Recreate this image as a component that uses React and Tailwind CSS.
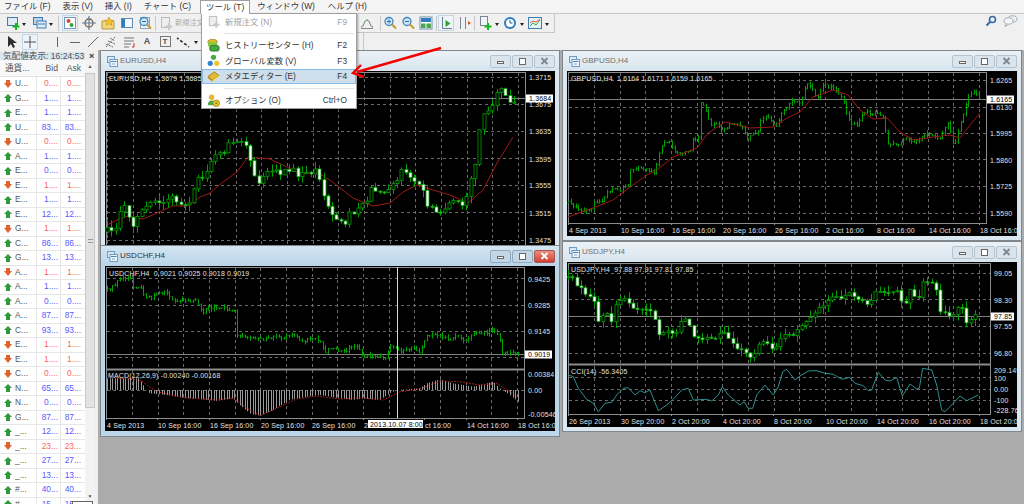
import React from "react";

const range = (start, n, step = 25.66) => Array.from({ length: n }, (_, i) => Math.round(start + i * step));
const z = (ox, oy, pts) => pts.map(([a, b]) => [ox + a / 3, oy + b / 3]);

function lerp(pts, x) {
  if (x <= pts[0][0]) return pts[0][1];
  for (let i = 1; i < pts.length; i++) {
    if (x <= pts[i][0]) {
      const [x0, y0] = pts[i - 1];
      const [x1, y1] = pts[i];
      return y0 + ((y1 - y0) * (x - x0)) / (x1 - x0);
    }
  }
  return pts[pts.length - 1][1];
}

function rng(seed) {
  let s = seed;
  return () => {
    s = (s * 16807) % 2147483647;
    return s / 2147483647;
  };
}

const line = (pts) => pts.map(([a, b]) => `${a.toFixed(1)},${b.toFixed(1)}`).join(" ");

function Candles({ pts, from, to, seed, noise = 2 }) {
  const r = rng(seed);
  const out = [];
  let o = lerp(pts, from);
  for (let x = from, i = 0; x <= to; x += 4.33, i++) {
    const c = lerp(pts, x) + (r() - 0.5) * noise;
    const top = Math.min(o, c);
    const bot = Math.max(o, c);
    const px = Math.round(x) + 0.5;
    const hi = top - r() * 7;
    const lo = bot + r() * 7;
    out.push(
      <g key={i}>
        <path d={`M${px} ${hi}V${lo}`} className="stroke-[#00a000]" />
        <rect
          x={px - 1.5}
          y={top}
          width={3}
          height={Math.max(bot - top, 1)}
          className={c > o ? "fill-white stroke-[#00a000]" : "fill-black stroke-[#00a000]"}
          strokeWidth={0.8}
        />
      </g>
    );
    o = c;
  }
  return <g>{out}</g>;
}

function Bars({ pts, from, to, seed }) {
  const r = rng(seed);
  let d = "";
  let o = lerp(pts, from);
  for (let x = from; x <= to; x += 2.6) {
    const c = lerp(pts, x) + (r() - 0.5) * 3;
    const px = Math.round(x) + 0.5;
    const hi = Math.min(o, c) - r() * 3;
    const lo = Math.max(o, c) + r() * 3;
    d += `M${px} ${hi.toFixed(1)}V${lo.toFixed(1)}M${px - 1} ${o.toFixed(1)}H${px}M${px} ${c.toFixed(1)}H${px + 1}`;
    o = c;
  }
  return <path d={d} fill="none" className="stroke-[#00a000]" strokeWidth={1} />;
}

function Label({ x, y, children, dark }) {
  return (
    <text x={x} y={y} dominantBaseline="central" className={dark ? "fill-black" : "fill-[#e0e0e0]"}>
      {children}
    </text>
  );
}

function Chart({ box, right, bottom, hGrid, vGrid, current, head, prices, box2, times, children }) {
  return (
    <svg viewBox={`${box[0]} ${box[1]} ${box[2]} ${box[3]}`} className="block h-full w-full text-[7px] tracking-[0.15px]">
      <rect x={box[0] + 1.5} y={box[1] + 1.5} width={right - box[0] - 1} height={bottom - box[1] - 1} fill="none" className="stroke-[#8c8c8c]" />
      {hGrid.map((y) => (
        <path key={y} d={`M${box[0] + 2} ${y + 0.5}H${right}`} className="stroke-[#6a6a6a]" strokeDasharray="3 3" />
      ))}
      {vGrid.map((x) => (
        <path key={x} d={`M${x + 0.5} ${box[1] + 2}V${bottom}`} className="stroke-[#6a6a6a]" strokeDasharray="3 3" />
      ))}
      <path d={`M${box[0] + 2} ${current + 0.5}H${right}`} className="stroke-[#808080]" />
      {children}
      <Label x={box[0] + 4} y={box[1] + 7}>{head}</Label>
      {prices.map(([t, y]) => (
        <Label key={t} x={right + 4} y={y}>{t}</Label>
      ))}
      <rect x={right + 1} y={current - 3.5} width={box2} height={8} className="fill-white" />
      <Label x={right + 4} y={current + 0.5} dark>{prices.current}</Label>
      {times.map(([t, x]) => (
        <g key={t}>
          <path d={`M${x + 0.5} ${bottom}v2`} className="stroke-[#8c8c8c]" />
          <Label x={x + 1} y={bottom + 7}>{t}</Label>
        </g>
      ))}
    </svg>
  );
}

const eurPrice = [[107,232],[117,227],[120,207],[125,200],[133,227],[147,200],[153,203],[163,200],[175,197],[185,210],[197,180],[213,160],[227,147],[243,143],[248,157],[253,177],[263,180],[270,170],[287,170],[297,175],[304,168],[317,173],[322,193],[330,213],[343,223],[353,210],[363,207],[373,187],[382,190],[390,185],[402,173],[410,178],[423,185],[428,210],[440,213],[450,207],[457,197],[463,210],[475,160],[480,123],[487,108],[500,93],[513,100]];
const eurMa = [[107,225],[117,220],[128,216],[143,219],[157,213],[172,206],[187,206],[200,197],[210,193],[223,182],[237,172],[248,157],[270,159],[287,167],[300,174],[317,172],[330,180],[340,188],[353,198],[373,206],[390,203],[403,192],[417,185],[433,190],[450,195],[468,203],[483,190],[497,163],[513,137]];
const gbpPrice = [[568,203],[580,210],[592,210],[593,203],[603,200],[608,190],[620,190],[623,185],[628,185],[630,170],[638,167],[647,170],[655,173],[658,157],[663,143],[670,142],[673,150],[680,153],[690,152],[693,140],[698,137],[699,102],[705,107],[710,125],[717,125],[722,130],[732,123],[742,127],[747,138],[757,133],[762,117],[770,118],[775,127],[783,110],[792,100],[800,102],[807,83],[817,97],[823,85],[833,88],[843,100],[848,120],[857,127],[863,113],[875,113],[883,118],[887,143],[900,145],[907,137],[915,143],[927,133],[938,140],[948,123],[954,148],[962,117],[967,100],[975,90],[980,100]];
const gbpMa = [[568,217],[593,208],[613,200],[630,187],[647,175],[657,170],[673,157],[697,148],[708,133],[725,122],[750,128],[773,127],[787,118],[800,112],[813,97],[833,90],[848,95],[860,110],[873,119],[887,118],[900,132],[913,140],[933,137],[950,135],[960,138],[970,125],[980,113]];
const chfPrice = [[107,290],[115,285],[120,278],[130,277],[133,287],[140,287],[145,298],[153,297],[158,293],[168,293],[173,302],[182,300],[185,302],[195,300],[198,304],[202,313],[208,308],[217,307],[233,310],[236,312],[237,335],[247,338],[263,340],[270,337],[282,338],[293,333],[300,342],[313,338],[320,342],[324,352],[333,348],[343,352],[355,345],[363,355],[373,355],[385,360],[390,345],[400,352],[410,348],[420,353],[425,337],[437,335],[450,340],[457,335],[465,342],[475,332],[487,333],[492,330],[498,335],[502,353],[518,354]];
const macdHist = [
  ...z(100, 245, [[20,400],[120,400],[135,430],[150,445],[200,450],[250,458],[300,462],[350,468],[400,460],[420,480],[450,505],[480,512],[520,495],[570,465],[620,455],[660,450],[720,460]]),
  ...z(340, 245, [[40,465],[70,460],[120,465],[150,445],[170,435],[240,430],[260,415],[300,403],[340,415],[400,425],[460,410],[480,430],[510,450],[535,470]]),
];
const macdSignal = [
  ...z(100, 245, [[20,392],[60,400],[120,405],[170,440],[250,458],[350,465],[400,458],[440,490],[480,512],[530,490],[590,462],[650,453],[720,462]]),
  ...z(340, 245, [[60,458],[130,465],[180,440],[240,432],[300,408],[360,410],[420,420],[470,415],[530,455]]),
];
const jpyPrice = [[568,277],[573,277],[577,287],[582,288],[586,295],[590,297],[594,302],[598,322],[603,315],[607,313],[612,323],[616,303],[620,300],[624,298],[628,303],[633,308],[637,309],[642,309],[650,310],[654,318],[659,335],[663,333],[667,331],[672,333],[676,333],[680,322],[684,318],[688,322],[693,337],[697,337],[701,341],[705,337],[710,338],[714,340],[718,335],[722,330],[727,338],[731,340],[735,348],[740,349],[744,350],[748,357],[753,357],[757,345],[761,344],[765,340],[770,348],[774,350],[778,342],[783,335],[787,334],[791,334],[795,336],[799,325],[804,325],[808,318],[813,317],[817,308],[821,306],[825,305],[829,299],[833,296],[838,297],[842,299],[847,293],[851,292],[855,299],[859,300],[863,301],[868,305],[872,299],[876,291],[881,292],[885,293],[889,293],[894,292],[898,290],[902,303],[906,303],[910,290],[915,297],[919,297],[923,282],[928,282],[932,283],[936,290],[940,312],[944,312],[949,316],[953,315],[957,307],[962,308],[966,323],[970,320],[974,315],[978,315]];
const cci = [
  ...z(560, 240, [[25,405],[40,410],[55,445],[80,478],[100,490],[115,515],[135,490],[155,487],[170,465],[190,445],[205,443],[225,465],[240,452],[255,458],[270,450],[295,512],[320,495],[340,478],[365,450],[385,445],[400,480],[440,478],[455,483],[475,465],[487,440],[505,465],[540,495],[552,485],[565,505],[578,505],[590,465],[615,435],[640,465],[655,440],[668,395],[680,388],[705,420],[720,408]]),
  ...z(800, 240, [[25,393],[50,392],[75,400],[100,403],[125,418],[150,412],[165,430],[190,437],[205,452],[215,450],[235,397],[255,420],[270,423],[290,412],[307,468],[330,432],[350,447],[358,445],[368,385],[395,390],[410,435],[425,510],[435,515],[460,490],[480,468],[500,482],[535,465]]),
];

function withCurrent(list, current) {
  const copy = [...list];
  copy.current = current;
  return copy;
}

function WinIcon() {
  return (
    <svg width="11" height="11" viewBox="0 0 11 11" className="shrink-0">
      <rect x="0.5" y="0.5" width="7" height="6" fill="#dbe8f4" stroke="#6f9cc4" />
      <rect x="3" y="3.5" width="7.5" height="7" fill="#eef4fa" stroke="#6f9cc4" />
      <path d="M4 5.5h5.5" stroke="#4c86b8" />
      <path d="M5 8h3" stroke="#8aa9c6" />
    </svg>
  );
}

function Window({ className, title, active, children }) {
  const btn = active ? "border-[#8fa9bf] bg-[#c3d6e6]" : "border-[#b5c3cf] bg-[#d9e4ed]";
  return (
    <div
      className={`absolute flex w-[460px] flex-col border border-[#7f868c] ${
        active ? "bg-[#bdd7ea]" : "bg-[#dbe7f0]"
      } ${className}`}
    >
      <div
        className={`flex h-[20px] shrink-0 items-center pl-[6px] pr-[4px] ${
          active ? "bg-gradient-to-b from-[#d3e5f2] to-[#b9d4e8]" : "bg-gradient-to-b from-[#ebf1f6] to-[#d8e5ee]"
        }`}
      >
        <WinIcon />
        <span className={`ml-[2px] text-[8px] ${active ? "text-[#333]" : "text-[#707070]"}`}>{title}</span>
        <div className="ml-auto flex gap-[1px]">
          <div className={`flex h-[13px] w-[21px] items-center justify-center rounded-[2px] border ${btn}`}>
            <div className="mt-[3px] h-[3px] w-[7px] border border-[#666] bg-white" />
          </div>
          <div className={`flex h-[13px] w-[21px] items-center justify-center rounded-[2px] border ${btn}`}>
            <div className="h-[7px] w-[7px] border border-[#666] bg-white" />
          </div>
          <div
            className={`flex h-[13px] w-[21px] items-center justify-center rounded-[2px] border ${
              active ? "border-[#a8564e] bg-gradient-to-b from-[#e88d80] to-[#cf3f30]" : btn
            }`}
          >
            <svg width="9" height="8" viewBox="0 0 9 8">
              <path d="M1.5 1l6 6M7.5 1l-6 6" stroke={active ? "#fff" : "#7b8791"} strokeWidth="1.8" />
            </svg>
          </div>
        </div>
      </div>
      <div className="mx-[4px] bg-black">{children}</div>
    </div>
  );
}

const symbols = [
  ["U", 0, "0....", "0...."], ["G", 1, "1....", "1...."], ["E", 1, "1....", "1...."], ["U", 1, "83...", "83..."],
  ["U", 0, "0....", "0...."], ["A", 1, "1....", "1...."], ["E", 1, "0....", "0...."], ["E", 0, "1....", "1...."],
  ["E", 1, "1....", "1...."], ["E", 1, "12...", "12..."], ["G", 0, "1....", "1...."], ["C", 1, "86...", "86..."],
  ["G", 1, "13...", "13..."], ["A", 0, "1....", "1...."], ["A", 1, "1....", "1...."], ["A", 1, "0....", "0...."],
  ["A", 1, "87...", "87..."], ["C", 1, "93...", "93..."], ["E", 0, "1....", "1...."], ["E", 0, "1....", "1...."],
  ["C", 0, "0....", "0...."], ["N", 1, "65...", "65..."], ["N", 1, "0....", "0...."], ["G", 1, "87...", "87..."],
  ["_", 1, "12...", "12..."], ["_", 0, "23...", "23..."], ["_", 1, "27...", "27..."], ["_", 1, "13...", "13..."],
  ["#", 1, "40...", "40..."], ["#", 1, "15...", "15..."],
];

function Tick({ up }) {
  return up ? (
    <svg width="8" height="8" viewBox="0 0 8 8">
      <path d="M4 0l4 4H6v4H2V4H0z" fill="#2f9a3c" />
    </svg>
  ) : (
    <svg width="8" height="8" viewBox="0 0 8 8">
      <path d="M2 0h4v3h2L4 8 0 3h2z" fill="#e0622c" />
    </svg>
  );
}

function MarketWatch() {
  return (
    <div className="flex h-full w-[98px] shrink-0 flex-col bg-[#f0f0f0] pt-[2px]">
      <div className="flex h-[8px] w-[85px] shrink-0 items-center bg-[#d9e6f1] pl-[3px] text-[8.6px] text-[#555]">
        <span className="whitespace-nowrap">気配値表示: 16:24:53</span>
      </div>
      <div className="absolute left-[89px] top-[51px] z-10 text-[9px] font-bold leading-[10px] text-[#333]">×</div>
      <div className="flex min-h-0 flex-1">
        <div className="w-[85px] shrink-0 overflow-hidden bg-white">
          <div className="flex h-[17px] items-center border-b border-[#e2e2e2] bg-[#f8f8f8] text-[8.6px] text-[#555]">
            <span className="w-[36px] pl-[5px]">通貨...</span>
            <span className="w-[24px] pr-[2px] text-right">Bid</span>
            <span className="w-[24px] pr-[3px] text-right">Ask</span>
          </div>
          {symbols.map(([s, up, bid, ask], i) => (
            <div key={i} className="flex h-[14.5px] items-center border-b border-[#e6e6e6] text-[8.4px]">
              <span className="flex w-[36px] items-center gap-[3px] pl-[4px] text-[#555]">
                <Tick up={up} />
                {s}...
              </span>
              <span className={`flex h-full w-[24px] items-center justify-end border-l border-[#e6e6e6] pr-[2px] ${up ? "text-[#5a5aff]" : "text-[#ff5f5f]"}`}>
                {bid}
              </span>
              <span className={`flex h-full w-[24px] items-center justify-end border-l border-[#e6e6e6] pr-[3px] ${up ? "text-[#5a5aff]" : "text-[#ff5f5f]"}`}>
                {ask}
              </span>
            </div>
          ))}
        </div>
        <div className="flex h-full w-[10px] shrink-0 flex-col bg-[#f3f3f3]">
          <div className="flex h-[13px] items-center justify-center text-[5px] text-[#555]">▲</div>
          <div className="flex h-[335px] items-center justify-center border border-[#c8c8c8] bg-[#e2e2e2]">
            <div className="h-[4px] w-[5px] border-y border-[#999]" />
          </div>
          <div className="mt-auto flex h-[14px] items-center justify-center text-[5px] text-[#555]">▼</div>
        </div>
      </div>
      <div className="absolute bottom-0 left-[72px] h-[3px] w-[21px] border border-b-0 border-[#666] bg-white" />
    </div>
  );
}

const Ico = ({ children }) => (
  <svg width="14" height="14" viewBox="0 0 14 14" className="block">
    {children}
  </svg>
);
const Dd = () => <div className="mx-[2px] mt-[2px] h-0 w-0 border-x-[2.5px] border-t-[3px] border-x-transparent border-t-[#222]" />;
const Sep = ({ className = "" }) => <div className={`h-[15px] w-px bg-[#c8c8c8] ${className}`} />;
const Slot = ({ w = "w-[18px]", on, children }) => (
  <div className={`flex h-[16px] shrink-0 items-center justify-center ${w} ${on ? "border border-[#c3d6e8] bg-[#eef4fa]" : ""}`}>
    {children}
  </div>
);

const plus = <path d="M9 7h2v2.5h2.5v2H11V14H9v-2.5H6.5v-2H9z" fill="#16b81c" />;
const magnifier = (sign) => (
  <>
    <circle cx="6" cy="5.5" r="4" fill="#cfe6f5" stroke="#3f86c0" strokeWidth="1.3" />
    <path d="M9 8.5l4 4" stroke="#c49a35" strokeWidth="2" />
    <path d={sign} stroke="#2f6fa8" />
  </>
);

function Toolbars() {
  return (
    <div className="h-[36px] shrink-0">
      <div className="flex h-[19px] w-[555px] items-center border-b border-r border-[#c6c6c6] pl-[5px]">
        <Slot w="w-[15px]"><Ico><rect x="1.5" y="1.5" width="10" height="8" fill="#dfeaf5" stroke="#3f7cb5" />{plus}</Ico></Slot>
        <Dd />
        <div className="w-[4px]" />
        <Slot w="w-[15px]"><Ico><rect x="0.5" y="1.5" width="9" height="7" fill="#bcd4ea" stroke="#3f7cb5" /><rect x="4" y="5" width="9" height="7" fill="#dfeaf5" stroke="#3f7cb5" /><path d="M5 8h7" stroke="#3f7cb5" /></Ico></Slot>
        <Dd />
        <div className="w-[3px]" />
        <Sep />
        <div className="w-[3px]" />
        <Slot w="w-[16px]" on><Ico><rect x="1.5" y="1.5" width="11" height="11" fill="#fff" stroke="#6d99c0" /><circle cx="5.5" cy="5" r="2" fill="#d9482f" /><circle cx="8.5" cy="9" r="2" fill="#32a23c" /></Ico></Slot>
        <div className="w-[3px]" />
        <Slot w="w-[16px]"><Ico><circle cx="7" cy="7" r="4" fill="none" stroke="#7d5c3b" strokeWidth="1.3" /><path d="M7 0v14M0 7h14" stroke="#5f7f9c" strokeWidth="1.2" /></Ico></Slot>
        <div className="w-[3px]" />
        <Slot w="w-[16px]"><Ico><path d="M1 5h12v8H1z" fill="#f1d67a" stroke="#b99a3c" /><path d="M8 1l1.4 3 3 .3-2.3 2 .7 3L8 7.8 5.2 9.3l.7-3-2.3-2 3-.3z" fill="#f4c430" stroke="#b98c1c" strokeWidth=".6" /></Ico></Slot>
        <div className="w-[3px]" />
        <Slot w="w-[16px]"><Ico><rect x="1.5" y="2.5" width="11" height="9" fill="#f4f8fb" stroke="#5d8bb3" /><rect x="2" y="3" width="3" height="8" fill="#2f7dbc" /></Ico></Slot>
        <div className="w-[2px]" />
        <Slot w="w-[16px]"><Ico><rect x="2.5" y="1.5" width="9" height="11" fill="#eef3f8" stroke="#8aa2b7" />{magnifier("M4 5.5h4")}</Ico></Slot>
        <div className="w-[2px]" />
        <Sep />
        <div className="w-[3px]" />
        <Slot w="w-[14px]"><Ico><rect x="2.5" y="1.5" width="8" height="10" fill="#eee" stroke="#bbb" /><path d="M9 7h2v2.5h2.5v2H11V14H9v-2.5H6.5v-2H9z" fill="#c9c9c9" /></Ico></Slot>
        <span className="ml-[2px] text-[7.2px] text-[#aaa]">新規注文</span>
        <div className="w-[156px] shrink-0" />
        <Slot w="w-[14px]"><Ico><path d="M1 11C4 11 4 4 7 4s3 7 6 7" fill="none" stroke="#4b7a4b" /><path d="M1 12.5h12" stroke="#888" /></Ico></Slot>
        <div className="w-[6px]" />
        <Sep />
        <div className="w-[1px]" />
        <Slot w="w-[16px]"><Ico>{magnifier("M4 5.5h4M6 3.5v4")}</Ico></Slot>
        <div className="w-[2px]" />
        <Slot w="w-[16px]"><Ico>{magnifier("M4 5.5h4")}</Ico></Slot>
        <div className="w-[3px]" />
        <Slot w="w-[14px]"><Ico><rect x="1" y="1" width="12" height="12" fill="#fff" stroke="#6d8fae" /><rect x="2" y="2" width="10" height="4" fill="#2f7dbc" /><rect x="2" y="7.5" width="4.5" height="4.5" fill="#4da64d" /><rect x="7.5" y="7.5" width="4.5" height="4.5" fill="#4da64d" /></Ico></Slot>
        <div className="w-[3px]" />
        <Sep />
        <div className="w-[1px]" />
        <Slot w="w-[16px]" on><Ico><path d="M3.5 1v11.5H13" fill="none" stroke="#6e7f8c" /><path d="M6.5 4l5 3.5-5 3.5z" fill="#23a82a" /></Ico></Slot>
        <div className="w-[2px]" />
        <Slot w="w-[16px]"><Ico><path d="M3.5 1v12M8.5 1v12" stroke="#7a8896" /><path d="M11 5v4l3-2z" fill="#d9582f" /></Ico></Slot>
        <div className="w-[2px]" />
        <Sep />
        <div className="w-[3px]" />
        <Slot w="w-[15px]"><Ico><rect x="2.5" y="0.5" width="7" height="9" fill="#f2f5f8" stroke="#7a8896" />{plus}</Ico></Slot>
        <Dd />
        <div className="w-[2px]" />
        <Slot w="w-[15px]"><Ico><circle cx="7" cy="7" r="6" fill="#2f7ec0" /><circle cx="7" cy="7" r="4" fill="#fff" /><path d="M7 4v3h2.5" stroke="#1f5f95" fill="none" /></Ico></Slot>
        <Dd />
        <div className="w-[2px]" />
        <Slot w="w-[15px]"><Ico><rect x="0.5" y="1.5" width="13" height="11" fill="#eaf2f9" stroke="#3f7cb5" /><path d="M2 10l3-3 3 2 4-5" fill="none" stroke="#3da03d" /><path d="M2 7l3-2 3 1 4-3" fill="none" stroke="#d9582f" /></Ico></Slot>
        <Dd />
      </div>
      <div className="flex h-[17px] w-[364px] items-center border-r border-[#c6c6c6] pl-[4px]">
        <Slot w="w-[14px]"><Ico><path d="M4 1v11l3-3 2 4 2-1-2-4h4z" fill="#2d2d2d" /></Ico></Slot>
        <div className="w-[4px]" />
        <Slot w="w-[16px]" on><Ico><path d="M7 1v12M1 7h12" stroke="#555" /></Ico></Slot>
        <div className="w-[5px]" />
        <Sep className="opacity-0" />
        <div className="w-[4px]" />
        <Slot><Ico><path d="M7.5 2v10" stroke="#666" /></Ico></Slot>
        <Slot><Ico><path d="M2 7.5h10" stroke="#666" /></Ico></Slot>
        <Slot><Ico><path d="M2 12L12 2" stroke="#666" /></Ico></Slot>
        <Slot><Ico><path d="M2 12L11 2M6 3l5 3M4 6l7 3M2 9l7 3" stroke="#666" strokeDasharray="2 1" /></Ico></Slot>
        <Slot><Ico><path d="M2 3h10M2 6h10M2 9h7M2 12h5" stroke="#777" /><path d="M12 8v4h-2" stroke="#c0392b" fill="none" /></Ico></Slot>
        <Slot><span className="text-[9px] font-bold text-[#555]">A</span></Slot>
        <Slot><div className="flex h-[11px] w-[11px] items-center justify-center border border-[#777] text-[8px] font-bold text-[#555]">T</div></Slot>
        <Slot><Ico><path d="M1 3l4 3M5 6l4 3M9 9l4 3" stroke="#333" strokeWidth="1.6" strokeDasharray="2 2" /></Ico></Slot>
        <Dd />
        <div className="w-[4px]" />
        <Sep />
      </div>
    </div>
  );
}

function MenuIcon({ children }) {
  return (
    <svg width="13" height="13" viewBox="0 0 14 14" className="block">
      {children}
    </svg>
  );
}

function MenuRow({ icon, label, keys, on, off }) {
  return (
    <div
      className={`flex h-[16px] items-center border pr-[8px] ${
        on ? "border-[#86bce8] bg-[#cfdeeb]" : "border-transparent"
      }`}
    >
      <div className="flex w-[21px] justify-center">{icon}</div>
      <span className={`ml-[1px] ${off ? "text-[#a0a0a0]" : "text-[#333]"}`}>{label}</span>
      <span className={`ml-auto ${off ? "text-[#a0a0a0]" : "text-[#333]"}`}>{keys}</span>
    </div>
  );
}

function ToolsMenu() {
  return (
    <div className="absolute left-[201px] top-[13px] z-20 flex h-[96px] w-[156px] flex-col border border-[#a0a0a0] bg-white text-[8.3px] shadow-[1px_1px_2px_rgba(0,0,0,0.35)]">
      <MenuRow
        off
        label="新規注文 (N)"
        keys="F9"
        icon={<MenuIcon><rect x="2.5" y="1.5" width="8" height="10" fill="#eee" stroke="#bbb" /><path d="M9 7h2v2.5h2.5v2H11V14H9v-2.5H6.5v-2H9z" fill="#c9c9c9" /></MenuIcon>}
      />
      <div className="my-[3.5px] ml-[22px] mr-[2px] h-px shrink-0 bg-[#e2e2e2]" />
      <MenuRow
        label="ヒストリーセンター (H)"
        keys="F2"
        icon={<MenuIcon><ellipse cx="6" cy="3" rx="5" ry="2.5" fill="#e6bd2e" stroke="#a98715" /><rect x="1" y="3" width="10" height="5" fill="#8ec63f" /><rect x="3" y="7" width="10" height="6" rx="2" fill="#45a845" stroke="#2d7d2d" /></MenuIcon>}
      />
      <MenuRow
        label="グローバル変数 (V)"
        keys="F3"
        icon={<MenuIcon><circle cx="7" cy="3.5" r="2.8" fill="#47ad3f" /><circle cx="3.5" cy="10" r="2.8" fill="#2f84d0" /><circle cx="10.5" cy="10" r="2.8" fill="#efc52e" /></MenuIcon>}
      />
      <MenuRow
        on
        label="メタエディター (E)"
        keys="F4"
        icon={<MenuIcon><path d="M1 7l7-5 5 4-7 5z" fill="#e3b93c" stroke="#a17e1c" /><path d="M1 7v2l5 4v-2z" fill="#c29522" /><path d="M6 13l7-5V6l-7 5z" fill="#f2d97e" /></MenuIcon>}
      />
      <div className="my-[3.5px] ml-[22px] mr-[2px] h-px shrink-0 bg-[#e2e2e2]" />
      <MenuRow
        label="オプション (O)"
        keys="Ctrl+O"
        icon={<MenuIcon><circle cx="5" cy="3.5" r="3" fill="#e2b93a" /><path d="M1 12c0-4 2-5 4-5s4 1 4 5z" fill="#4aa84a" /><circle cx="10" cy="10" r="3.5" fill="#efc52e" stroke="#a98715" /><circle cx="10" cy="10" r="1" fill="#5a8a2a" /></MenuIcon>}
      />
    </div>
  );
}

const menus = ["ファイル (F)", "表示 (V)", "挿入 (I)", "チャート (C)"];

export default function App() {
  return (
    <div className="relative flex h-[504px] w-[1024px] flex-col overflow-hidden bg-[#f0f0f0] font-['Liberation_Sans','Noto_Sans_CJK_JP',sans-serif] text-[#333]">
      <div className="flex h-[14px] shrink-0 items-center border-b border-[#c8c8c8] bg-[#f5f5f5] pl-[4px] text-[8.4px]">
        {menus.map((m) => (
          <span key={m} className="mr-[12px]">{m}</span>
        ))}
        <span className="z-30 -ml-[3px] flex h-[14px] w-[50px] items-center justify-center border-x border-t border-[#a0a0a0] bg-white">ツール (T)</span>
        <span className="ml-[7px] mr-[13px]">ウィンドウ (W)</span>
        <span>ヘルプ (H)</span>
      </div>

      <div className="relative">
        <Toolbars />
        <svg width="12" height="12" viewBox="0 0 12 12" className="absolute left-[985px] top-[1px]">
          <circle cx="7.5" cy="4.5" r="3" fill="none" stroke="#3467a8" strokeWidth="1.6" />
          <path d="M5 7l-3.5 3.5" stroke="#3467a8" strokeWidth="2" />
        </svg>
        <svg width="15" height="12" viewBox="0 0 15 12" className="absolute left-[1003px] top-[1px]">
          <ellipse cx="9.5" cy="4" rx="4.5" ry="3.2" fill="#eef0f2" stroke="#a5abb1" />
          <ellipse cx="5.5" cy="6" rx="4.5" ry="3.2" fill="#f5f6f7" stroke="#a5abb1" />
          <path d="M3 9l-1 2.5 3-2" fill="#f5f6f7" stroke="#a5abb1" />
        </svg>
      </div>

      <div className="flex min-h-0 flex-1">
        <MarketWatch />
        <div className="relative flex-1 bg-[#ababab]">
          <Window className="left-[2px] top-0 z-0" title="EURUSD,H4">
            <div className="h-[175px]">
              <Chart
                box={[105, 71, 450, 175]}
                right={525}
                bottom={260}
                hGrid={[77, 104, 131, 158, 185, 212, 240]}
                vGrid={[107, ...range(133, 16)]}
                current={98}
                head={"EURUSD,H4\u00a0\u00a01.3679 1.3685 1.3670 1.3684"}
                prices={withCurrent(
                  [["1.3715", 77], ["1.3675", 104], ["1.3635", 131], ["1.3595", 159], ["1.3555", 185], ["1.3515", 213], ["1.3475", 240]],
                  "1.3684"
                )}
                box2={27}
                times={[]}
              >
                <polyline points={line(eurMa)} fill="none" className="stroke-[#a01818]" />
                <Candles pts={eurPrice} from={107} to={515} seed={4242} noise={10} />
              </Chart>
            </div>
          </Window>

          <Window className="left-[464px] top-0 z-0 h-[191px]" title="GBPUSD,H4">
            <div className="h-[165px]">
              <Chart
                box={[567, 71, 450, 165]}
                right={986}
                bottom={223}
                hGrid={[80, 107, 133, 159, 186, 213]}
                vGrid={range(594, 16)}
                current={99}
                head={"GBPUSD,H4\u00a0\u00a01.6164 1.6171 1.6159 1.6165"}
                prices={withCurrent(
                  [["1.6265", 80], ["1.6130", 107], ["1.5995", 133], ["1.5860", 160], ["1.5725", 186], ["1.5590", 213]],
                  "1.6165"
                )}
                box2={27}
                times={[["4 Sep 2013", 568], ["10 Sep 16:00", 620], ["16 Sep 16:00", 671], ["20 Sep 16:00", 722], ["26 Sep 16:00", 774], ["2 Oct 16:00", 825], ["8 Oct 16:00", 876], ["14 Oct 16:00", 928], ["18 Oct 16:00", 979]]}
              >
                <Bars pts={gbpPrice} from={568} to={981} seed={777} />
                <polyline points={line(gbpMa)} fill="none" className="stroke-[#a01818]" />
              </Chart>
            </div>
          </Window>

          <Window className="left-[2px] top-[195px] z-10 h-[192px]" title="USDCHF,H4" active>
            <div className="h-[165px]">
              <Chart
                box={[105, 266, 450, 165]}
                right={524}
                bottom={418}
                hGrid={[278, 305, 331, 357, 390]}
                vGrid={range(132, 16)}
                current={354}
                head={"USDCHF,H4\u00a0\u00a00.9021 0.9025 0.9018 0.9019"}
                prices={withCurrent(
                  [["0.9425", 279], ["0.9285", 305], ["0.9145", 331], ["0.00384", 374], ["0.00", 390], ["-0.00546", 414]],
                  "0.9019"
                )}
                box2={27}
                times={[["4 Sep 2013", 106], ["10 Sep 16:00", 157], ["16 Sep 16:00", 209], ["20 Sep 16:00", 260], ["26 Sep 16:00", 311], ["2", 363], ["ct 16:00", 424], ["14 Oct 16:00", 466], ["18 Oct 16:00", 517]]}
              >
                <Bars pts={chfPrice} from={107} to={518} seed={1999} />
                <path d="M107 369.5H524" className="stroke-[#8c8c8c]" strokeWidth="2" />
                {Array.from({ length: 159 }, (_, i) => {
                  const x = Math.round(107 + i * 2.6) + 0.5;
                  return <path key={i} d={`M${x} 390V${lerp(macdHist, x).toFixed(1)}`} className="stroke-[#999]" />;
                })}
                <polyline points={line(macdSignal)} fill="none" className="stroke-[#d02020]" strokeDasharray="1.5 1.5" />
                <path d="M397.5 267V418" className="stroke-[#d8d8d8]" />
                <Label x={108} y={375}>MACD(12,26,9) -0.00240 -0.00168</Label>
                <rect x={368} y={420} width={55} height={8} className="fill-white" />
                <Label x={370} y={424.5} dark>2013.10.07 8:00</Label>
              </Chart>
            </div>
          </Window>

          <Window className="left-[464px] top-[191px] z-0 h-[191px]" title="USDJPY,H4">
            <div className="h-[165px]">
              <Chart
                box={[567, 262, 450, 165]}
                right={990}
                bottom={414}
                hGrid={[273, 299, 326, 353, 377, 389, 400]}
                vGrid={range(594, 16)}
                current={316}
                head={"USDJPY,H4\u00a0\u00a097.88 97.91 97.81 97.85"}
                prices={withCurrent(
                  [["99.05", 273], ["98.30", 300], ["97.55", 326], ["96.80", 353], ["209.149", 370], ["100", 378], ["0.00", 389], ["-100", 400], ["-228.763", 410]],
                  "97.85"
                )}
                box2={23}
                times={[["26 Sep 2013", 568], ["30 Sep 20:00", 620], ["2 Oct 20:00", 671], ["4 Oct 20:00", 722], ["8 Oct 20:00", 773], ["10 Oct 20:00", 825], ["14 Oct 20:00", 876], ["16 Oct 20:00", 928], ["18 Oct 20:00", 979]]}
              >
                <Candles pts={jpyPrice} from={568} to={979} seed={31337} noise={1} />
                <path d="M568 364.5H990" className="stroke-[#8c8c8c]" strokeWidth="2" />
                <polyline points={line(cci)} fill="none" className="stroke-[#2f8f8f]" />
                <Label x={571} y={371}>CCI(14) -56.3405</Label>
              </Chart>
            </div>
          </Window>
        </div>
      </div>

      <ToolsMenu />

      <svg width="110" height="40" viewBox="0 0 110 40" className="absolute left-[345px] top-[42px] z-30">
        <path d="M96 6L12 30" stroke="#f40000" strokeWidth="2.4" />
        <path d="M16 23L8 31l11 4" fill="none" stroke="#f40000" strokeWidth="2.4" />
      </svg>
    </div>
  );
}
